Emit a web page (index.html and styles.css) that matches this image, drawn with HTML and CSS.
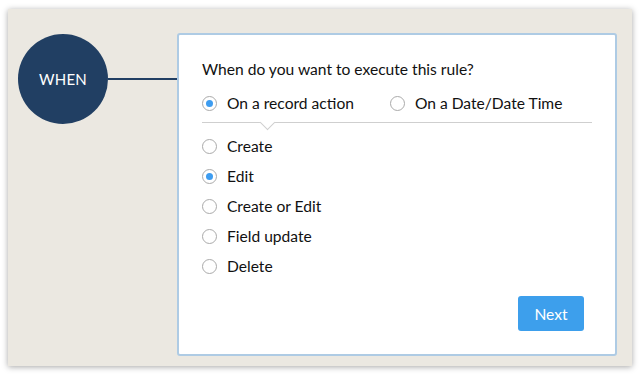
FILE: index.html
```html
<!DOCTYPE html>
<html>
<head>
<meta charset="utf-8">
<link rel="stylesheet" href="styles.css">
</head>
<body>
<div class="panel">
  <div class="left">
    <div class="circle">WHEN</div>
    <div class="connector"></div>
  </div>
  <div class="card">
    <div class="title">When do you want to execute this rule?</div>
    <div class="tabs">
      <label class="radio"><span class="dot on"></span>On a record action</label>
      <label class="radio"><span class="dot"></span>On a Date/Date Time</label>
    </div>
    <div class="divider"><span class="notch"></span></div>
    <div class="options">
      <label class="radio"><span class="dot"></span>Create</label>
      <label class="radio"><span class="dot on"></span>Edit</label>
      <label class="radio"><span class="dot"></span>Create or Edit</label>
      <label class="radio"><span class="dot"></span>Field update</label>
      <label class="radio"><span class="dot"></span>Delete</label>
    </div>
    <div class="actions"><button class="next">Next</button></div>
  </div>
</div>
</body>
</html>
```
FILE: styles.css
```css
* { box-sizing: border-box; }
html, body { margin: 0; padding: 0; background: #fff; }
body {
  width: 640px; height: 376px;
  padding: 9px 8px 10px 8px;
  font-family: Lato, "Open Sans", sans-serif;
  color: #111;
}
.panel {
  height: 357px;
  background: #ebe8e1;
  box-shadow: 0 1px 6px rgba(0,0,0,0.35);
  display: flex;
  padding: 24px 15px 10px 10px;
}
.left {
  display: flex;
  align-items: flex-start;
  padding-top: 1px;
}
.circle {
  width: 90px; height: 90px;
  border-radius: 50%;
  background: #213f63;
  color: #fff;
  font-size: 15px;
  display: flex; align-items: center; justify-content: center;
  letter-spacing: 0.2px;
}
.connector {
  width: 69px; height: 2px;
  background: #213f63;
  margin-top: 44px;
}
.card {
  flex: 1;
  background: #fff;
  border: 2px solid #aecbe4;
  border-radius: 3px;
  padding: 24px 23px 0 23px;
  display: flex; flex-direction: column;
}
.title { font-size: 15.6px; line-height: 20px; }
.tabs { display: flex; gap: 36px; margin-top: 14px; }
.radio {
  display: flex; align-items: center;
  font-size: 15.6px; line-height: 20px;
  height: 20px;
}
.dot {
  width: 15px; height: 15px;
  border: 1px solid #aaa;
  border-radius: 50%;
  margin-right: 10px;
  display: flex; align-items: center; justify-content: center;
  flex: none;
}
.dot.on::after {
  content: "";
  width: 7px; height: 7px; border-radius: 50%;
  background: #3d9cf0;
}
.divider {
  position: relative;
  height: 1px;
  background: #cfcfcf;
  margin-top: 9px;
}
.notch {
  position: absolute;
  left: 60px; top: -5px;
  width: 11px; height: 11px;
  background: #fff;
  border-right: 1px solid #cfcfcf;
  border-bottom: 1px solid #cfcfcf;
  transform: rotate(45deg);
}
.options {
  display: flex; flex-direction: column; gap: 10px;
  margin-top: 13px;
}
.actions { display: flex; justify-content: flex-end; margin-top: 20px; padding-right: 8px; }
.next {
  width: 66px; height: 35px;
  background: #3d9fec;
  color: #fff;
  border: none; border-radius: 3px;
  font-family: inherit; font-size: 15.6px;
}
```
